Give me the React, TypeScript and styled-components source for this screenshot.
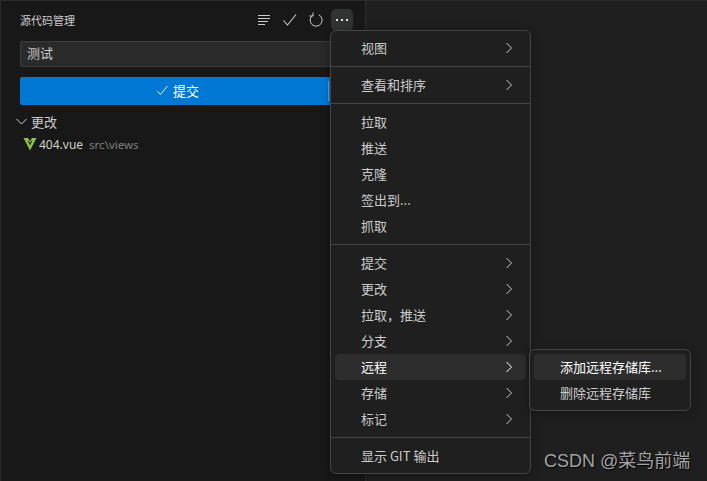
import React from "react";
import styled, { createGlobalStyle } from "styled-components";

const Global = createGlobalStyle`
  html, body { margin: 0; padding: 0; width: 707px; height: 481px; overflow: hidden; background: #1f1f1f; }
  * { box-sizing: border-box; }
  body { font-family: "Noto Sans CJK SC", "Liberation Sans", sans-serif; color: #cccccc; }
`;

const Page = styled.div`
  position: relative;
  width: 707px;
  height: 481px;
  display: flex;
  background: #1f1f1f;
  border-top: 1px solid #2b2b2b;
`;

const Sidebar = styled.aside`
  width: 366px;
  height: 100%;
  background: #181818;
  border-left: 1px solid #2b2b2b;
  border-right: 1px solid #2b2b2b;
  display: flex;
  flex-direction: column;
`;

const Header = styled.header`
  height: 30px;
  margin-top: 4px;
  padding: 0 12px 0 19px;
  display: flex;
  align-items: center;
  justify-content: space-between;
`;

const Title = styled.h2`
  margin: 0;
  font-size: 11px;
  font-weight: 400;
  color: #cccccc;
`;

const Actions = styled.div`
  display: flex;
  align-items: center;
  gap: 4px;
`;

const IconButton = styled.button<{ $active?: boolean }>`
  width: 22px;
  height: 22px;
  padding: 0;
  border: 0;
  border-radius: 5px;
  display: flex;
  align-items: center;
  justify-content: center;
  color: #cccccc;
  background: ${(p) => (p.$active ? "#313232" : "transparent")};
`;

const CommitBox = styled.div`
  padding: 6px 12px 0 19px;
  display: flex;
  flex-direction: column;
  gap: 10px;
`;

const MessageInput = styled.div`
  height: 26px;
  padding: 0 6px 3px;
  display: flex;
  align-items: center;
  font-size: 13px;
  color: #cccccc;
  background: #2a2a2a;
  border: 1px solid #3c3c3c;
  border-radius: 2px;
`;

const CommitButton = styled.div`
  height: 28px;
  display: flex;
  background: #0078d4;
  border-radius: 2px;
  color: #ffffff;
  font-size: 13px;
`;

const CommitLabel = styled.div`
  width: 308px;
  padding: 0 0 2px 7px;
  display: flex;
  align-items: center;
  justify-content: center;
  gap: 4px;
`;

const SplitLine = styled.span`
  width: 1px;
  height: 20px;
  margin-top: 4px;
  background: #6aa9dc;
`;

const SectionRow = styled.div`
  height: 22px;
  margin-top: 6px;
  padding: 0 0 2px 15px;
  display: flex;
  align-items: center;
  gap: 4px;
  font-size: 13px;
  color: #cccccc;
`;

const FileRow = styled.div`
  height: 22px;
  padding-left: 22px;
  display: flex;
  align-items: center;
`;

const FileName = styled.span`
  margin-left: 2px;
  font-family: "Noto Sans", "Liberation Sans", sans-serif;
  font-size: 12px;
  color: #cdd3c4;
`;

const FilePath = styled.span`
  margin-left: 6px;
  font-family: "Noto Sans", "Liberation Sans", sans-serif;
  font-size: 11.5px;
  color: #7f7f7f;
`;

const Editor = styled.main`
  flex: 1;
  background: #1f1f1f;
`;

const Menu = styled.div<{ $left: number; $top: number; $width: number }>`
  position: absolute;
  left: ${(p) => p.$left}px;
  top: ${(p) => p.$top}px;
  width: ${(p) => p.$width}px;
  padding: 4px;
  background: #1f1f1f;
  border: 1px solid #454545;
  border-radius: 6px;
  box-shadow: 0 2px 8px rgba(0, 0, 0, 0.36);
`;

const Item = styled.div<{ $hot?: boolean }>`
  height: 26px;
  padding: 0 9px 0 26px;
  display: flex;
  align-items: center;
  justify-content: space-between;
  font-size: 13px;
  border-radius: 4px;
  color: ${(p) => (p.$hot ? "#ffffff" : "#cccccc")};
  background: ${(p) => (p.$hot ? "#2d2d2d" : "transparent")};
`;

const ItemText = styled.span`
  position: relative;
  top: -1px;
`;

const SubItem = styled(Item)`
  padding: 0 0 0 26px;
  justify-content: flex-start;
`;

const Separator = styled.div`
  height: 1px;
  margin: 5px -4px;
  background: #454545;
`;

const Watermark = styled.div`
  position: absolute;
  left: 544px;
  top: 449px;
  font-size: 18px;
  line-height: 22px;
  color: #a3a3a3;
  text-shadow: 1px 1px 1px #000;
  font-family: "Liberation Sans", "Noto Sans CJK SC", sans-serif;
`;

const Chevron = () => (
  <svg width="16" height="16" viewBox="0 0 16 16" fill="none" stroke="currentColor" strokeWidth="1">
    <path d="M5.5 3 L10.5 8 L5.5 13" />
  </svg>
);

const ChevronDown = () => (
  <svg width="11" height="11" viewBox="0 0 11 11" fill="none" stroke="currentColor" strokeWidth="1">
    <path d="M0.5 3 L5.5 8 L10.5 3" />
  </svg>
);

const Check = ({ size = 16 }: { size?: number }) => (
  <svg width={size} height={size} viewBox="0 0 16 16" fill="none" stroke="currentColor" strokeWidth="1.1">
    <path d="M1.5 8.5 L5.5 13 L14 2.5" />
  </svg>
);

const Lines = () => (
  <svg width="16" height="16" viewBox="0 0 16 16" fill="none" stroke="currentColor" strokeWidth="1">
    <path d="M2 3.5H14M2 6.5H14M2 9.5H12M2 12.5H9" />
  </svg>
);

const Refresh = () => (
  <svg width="16" height="16" viewBox="0 0 16 16" fill="none" stroke="currentColor" strokeWidth="1">
    <path d="M4.5 3.4 A6 6 0 1 0 10.8 2.8" />
    <path d="M5 0.5 V4 H1.5" />
  </svg>
);

const Dots = () => (
  <svg width="16" height="16" viewBox="0 0 16 16" fill="#e4e4e4">
    <rect x="2" y="7" width="2" height="2" />
    <rect x="7" y="7" width="2" height="2" />
    <rect x="12" y="7" width="2" height="2" />
  </svg>
);

const VueIcon = () => (
  <svg width="14" height="14" viewBox="0 0 14 14">
    <path d="M0.5 1 H5 L7 4 L9 1 H13.5 L7 13.5 Z" fill="#8dc149" />
    <path d="M4.6 3.8 H5.6 L7 6 L8.4 3.8 H9.4 L7 8.2 Z" fill="#181818" />
  </svg>
);

type Row = { label: string; sub?: boolean; hot?: boolean };
const groups: Row[][] = [
  [{ label: "视图", sub: true }],
  [{ label: "查看和排序", sub: true }],
  [{ label: "拉取" }, { label: "推送" }, { label: "克隆" }, { label: "签出到..." }, { label: "抓取" }],
  [
    { label: "提交", sub: true },
    { label: "更改", sub: true },
    { label: "拉取，推送", sub: true },
    { label: "分支", sub: true },
    { label: "远程", sub: true, hot: true },
    { label: "存储", sub: true },
    { label: "标记", sub: true },
  ],
  [{ label: "显示 GIT 输出" }],
];

export default function App() {
  return (
    <>
      <Global />
      <Page>
        <Sidebar>
          <Header>
            <Title>源代码管理</Title>
            <Actions>
              <IconButton><Lines /></IconButton>
              <IconButton><Check /></IconButton>
              <IconButton><Refresh /></IconButton>
              <IconButton $active><Dots /></IconButton>
            </Actions>
          </Header>
          <CommitBox>
            <MessageInput>测试</MessageInput>
            <CommitButton>
              <CommitLabel>
                <Check size={13} />
                提交
              </CommitLabel>
              <SplitLine />
            </CommitButton>
          </CommitBox>
          <SectionRow>
            <ChevronDown />
            更改
          </SectionRow>
          <FileRow>
            <VueIcon />
            <FileName>404.vue</FileName>
            <FilePath>src\views</FilePath>
          </FileRow>
        </Sidebar>
        <Editor />
        <Menu $left={330} $top={29} $width={201}>
          {groups.map((g, i) => (
            <React.Fragment key={i}>
              {i > 0 && <Separator />}
              {g.map((r) => (
                <Item key={r.label} $hot={r.hot}>
                  <ItemText>{r.label}</ItemText>
                  {r.sub && <Chevron />}
                </Item>
              ))}
            </React.Fragment>
          ))}
        </Menu>
        <Menu $left={529} $top={348} $width={162}>
          <SubItem $hot><ItemText>添加远程存储库...</ItemText></SubItem>
          <SubItem><ItemText>删除远程存储库</ItemText></SubItem>
        </Menu>
        <Watermark>CSDN @菜鸟前端</Watermark>
      </Page>
    </>
  );
}
